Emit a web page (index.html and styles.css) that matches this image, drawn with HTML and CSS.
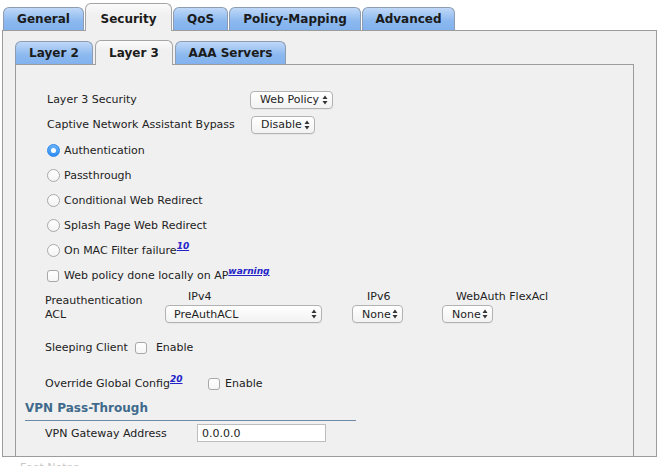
FILE: index.html
```html
<!DOCTYPE html>
<html>
<head>
<meta charset="utf-8">
<link rel="stylesheet" href="styles.css">
</head>
<body>
<div class="tabs tabs-outer">
  <div class="tab t-general">General</div>
  <div class="tab active t-security">Security</div>
  <div class="tab t-qos">QoS</div>
  <div class="tab t-policy">Policy-Mapping</div>
  <div class="tab t-advanced">Advanced</div>
</div>
<div class="panel panel-outer">
  <div class="tabs tabs-inner">
    <div class="tab t-l2">Layer 2</div>
    <div class="tab active t-l3">Layer 3</div>
    <div class="tab t-aaa">AAA Servers</div>
  </div>
  <div class="panel panel-inner">
    <div class="row">
      <span class="label label-main">Layer 3 Security</span>
      <span class="select s-webpolicy"><span>Web Policy</span><svg class="arrows" viewBox="0 0 6 10" width="6" height="10"><path d="M0.5 4 L3 0.5 L5.5 4 Z M0.5 6 L3 9.5 L5.5 6 Z"/></svg></span>
    </div>
    <div class="row">
      <span class="label label-main">Captive Network Assistant Bypass</span>
      <span class="select s-disable"><span>Disable</span><svg class="arrows" viewBox="0 0 6 10" width="6" height="10"><path d="M0.5 4 L3 0.5 L5.5 4 Z M0.5 6 L3 9.5 L5.5 6 Z"/></svg></span>
    </div>
    <div class="options">
      <div class="row"><span class="radio checked"></span><span>Authentication</span></div>
      <div class="row"><span class="radio"></span><span>Passthrough</span></div>
      <div class="row"><span class="radio"></span><span>Conditional Web Redirect</span></div>
      <div class="row"><span class="radio"></span><span>Splash Page Web Redirect</span></div>
      <div class="row"><span class="radio"></span><span>On MAC Filter failure<a class="sup">10</a></span></div>
      <div class="row"><span class="check"></span><span>Web policy done locally on AP<a class="sup">warning</a></span></div>
    </div>
    <div class="acl">
      <div class="acl-label">Preauthentication<br>ACL</div>
      <div class="acl-col c-v4">
        <div class="acl-head">IPv4</div>
        <span class="select s-preauth"><span>PreAuthACL</span><svg class="arrows" viewBox="0 0 6 10" width="6" height="10"><path d="M0.5 4 L3 0.5 L5.5 4 Z M0.5 6 L3 9.5 L5.5 6 Z"/></svg></span>
      </div>
      <div class="acl-col c-v6">
        <div class="acl-head">IPv6</div>
        <span class="select s-none"><span>None</span><svg class="arrows" viewBox="0 0 6 10" width="6" height="10"><path d="M0.5 4 L3 0.5 L5.5 4 Z M0.5 6 L3 9.5 L5.5 6 Z"/></svg></span>
      </div>
      <div class="acl-col c-flex">
        <div class="acl-head">WebAuth FlexAcl</div>
        <span class="select s-none"><span>None</span><svg class="arrows" viewBox="0 0 6 10" width="6" height="10"><path d="M0.5 4 L3 0.5 L5.5 4 Z M0.5 6 L3 9.5 L5.5 6 Z"/></svg></span>
      </div>
    </div>
    <div class="row row-sub row-sleep">
      <span class="label-sleep">Sleeping Client</span>
      <span class="check"></span>
      <span class="enable-sleep">Enable</span>
    </div>
    <div class="row row-sub row-override">
      <span class="label-override">Override Global Config<a class="sup">20</a></span>
      <span class="check"></span>
      <span class="enable-override">Enable</span>
    </div>
    <div class="section-head">VPN Pass-Through</div>
    <div class="row row-sub row-gateway">
      <span class="label-gateway">VPN Gateway Address</span>
      <input class="textbox" type="text" value="0.0.0.0">
    </div>
  </div>
</div>
<div class="footnote">Foot Notes</div>
</body>
</html>
```

FILE: styles.css
```css
html, body {
  margin: 0;
  padding: 0;
  background: #ffffff;
  overflow: hidden;
}
body {
  font-family: "DejaVu Sans", Verdana, sans-serif;
  font-size: 11px;
  color: #222222;
}

/* ---------- tabs ---------- */
.tabs {
  display: flex;
  align-items: flex-end;
  gap: 1px;
  position: relative;
  z-index: 2;
  margin-bottom: -1px;
}
.tabs-outer {
  height: 31px;
  padding-left: 3px;
}
.tabs-inner {
  height: 25px;
  gap: 2px;
}
.tab {
  box-sizing: border-box;
  height: 23px;
  margin-bottom: 1px;
  border: 1px solid #8d9cb1;
  border-bottom: none;
  border-radius: 6px 6px 0 0;
  background: linear-gradient(#bfd8f8, #8bb8ef 60%, #82b2ee);
  font-weight: bold;
  font-size: 12px;
  line-height: 22px;
  text-align: center;
  color: #1b1b1b;
}
.tab.active {
  height: 28px;
  margin-bottom: 0;
  padding-top: 4px;
  border-color: #a4a4a4;
  background: linear-gradient(#fbfbfb, #f0f0f0 40%);
}
.tabs-inner .tab.active {
  height: 25px;
  padding-top: 1px;
}
.t-general { width: 81px; }
.t-security { width: 87px; }
.t-qos { width: 55px; }
.t-policy { width: 132px; }
.t-advanced { width: 93px; }
.t-l2 { width: 78px; }
.t-l3 { width: 78px; }
.t-aaa { width: 111px; }

/* ---------- panels ---------- */
.panel {
  box-sizing: border-box;
  background: #f0f0f0;
  border: 1px solid #9c9c9c;
}
.panel-outer {
  margin-left: 2px;
  width: 655px;
  height: 427px;
  padding: 9px 0 0 12px;
  overflow: hidden;
  position: relative;
  z-index: 1;
}
.panel-inner {
  width: 619px;
  height: 430px;
  padding: 22px 0 0 9px;
}

/* ---------- rows ---------- */
.row {
  display: flex;
  align-items: center;
  height: 25px;
  padding-left: 22px;
}
.row-sub {
  padding-left: 20px;
}
.label-main {
  width: 203px;
  flex: none;
}
.options {
  margin-top: 1px;
}

/* ---------- controls ---------- */
.select {
  box-sizing: border-box;
  display: inline-flex;
  align-items: center;
  justify-content: space-between;
  height: 18px;
  border: 1px solid #b2b2b2;
  border-radius: 4px;
  background: linear-gradient(#ffffff, #f2f2f2);
  padding: 0 4px 0 9px;
  font-size: 11px;
  color: #1e1e1e;
  box-shadow: 0 1px 0 rgba(0,0,0,0.04);
}
.arrows {
  fill: #333333;
  flex: none;
}
.s-webpolicy { width: 83px; }
.s-disable { width: 64px; margin-left: 1px; }
.s-preauth { width: 157px; padding-left: 8px; }
.s-none { width: 51px; }

.radio {
  box-sizing: border-box;
  width: 13px;
  height: 13px;
  border-radius: 50%;
  border: 1px solid #a8a8a8;
  background: linear-gradient(#ffffff, #f4f4f4);
  margin-right: 4px;
  flex: none;
  display: flex;
  align-items: center;
  justify-content: center;
}
.radio.checked {
  border-color: #2d86e8;
  background: linear-gradient(#6ab2fa, #2e8ef3);
}
.radio.checked::after {
  content: "";
  width: 5px;
  height: 5px;
  border-radius: 50%;
  background: #ffffff;
}
.check {
  box-sizing: border-box;
  width: 12px;
  height: 12px;
  border-radius: 3px;
  border: 1px solid #a8a8a8;
  background: linear-gradient(#ffffff, #f6f6f6);
  margin-right: 5px;
  flex: none;
}
.sup {
  font-size: 9px;
  font-weight: bold;
  font-style: italic;
  color: #2323c8;
  text-decoration: underline;
  vertical-align: 5px;
  line-height: 0;
}

/* ---------- ACL block ---------- */
.acl {
  display: flex;
  margin-top: 2px;
  padding-left: 20px;
}
.acl-label {
  width: 120px;
  padding-top: 4px;
  line-height: 14px;
}
.acl-col {
  display: flex;
  flex-direction: column;
  align-items: flex-start;
}
.acl-head {
  line-height: 14px;
  margin-bottom: 1px;
}
.c-v4 { width: 187px; }
.c-v4 .acl-head { padding-left: 23px; }
.c-v6 { width: 90px; }
.c-v6 .acl-head { padding-left: 15px; }
.c-flex .acl-head { padding-left: 14px; }

/* ---------- other rows ---------- */
.row-sleep { margin-top: 12px; }
.label-sleep { margin-right: 7px; }
.row-sleep .check { margin-right: 9px; }
.row-override { margin-top: 11px; }
.label-override { width: 163px; flex: none; }
.row-override .check { margin-right: 5px; }

.section-head {
  margin-top: 4px;
  width: 331px;
  box-sizing: border-box;
  font-weight: bold;
  font-size: 12px;
  line-height: 16px;
  color: #3f6a8b;
  padding-bottom: 4px;
  border-bottom: 1px solid #6d8aa6;
}
.row-gateway {
  height: 22px;
  margin-top: 1px;
}
.label-gateway {
  width: 152px;
  flex: none;
}
.textbox {
  box-sizing: border-box;
  width: 129px;
  height: 18px;
  margin: 0;
  border: 1px solid #bdbdbd;
  background: #ffffff;
  padding: 0 0 0 4px;
  font-family: "DejaVu Sans", Verdana, sans-serif;
  font-size: 11px;
  color: #222222;
  outline: none;
}

.footnote {
  margin: 4px 0 0 20px;
  color: #c8c8c8;
  font-size: 11px;
  line-height: 14px;
}
```
